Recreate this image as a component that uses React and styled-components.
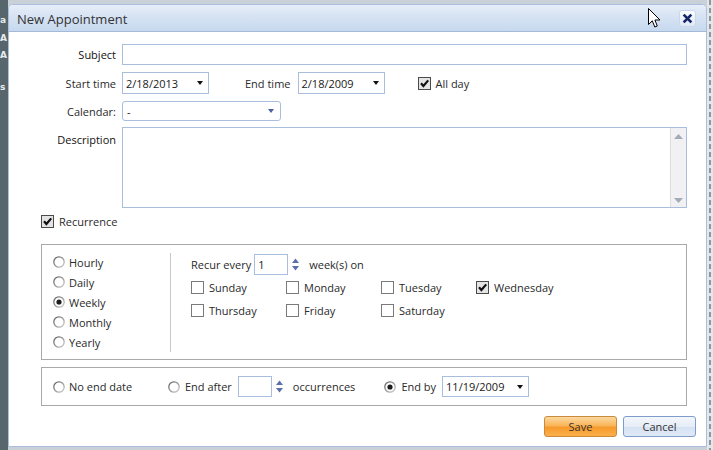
import React from "react";
import styled, { createGlobalStyle } from "styled-components";

const GlobalStyle = createGlobalStyle`
  html, body {
    margin: 0;
    padding: 0;
  }
  body {
    font-family: "Open Sans", "Noto Sans", sans-serif;
    font-size: 11px;
    color: #2a2a2a;
  }
`;

const days = [
  ["Sunday", false],
  ["Monday", false],
  ["Tuesday", false],
  ["Wednesday", true],
  ["Thursday", false],
  ["Friday", false],
  ["Saturday", false],
];

const frequencies = ["Hourly", "Daily", "Weekly", "Monthly", "Yearly"];

const CheckIcon = ({ checked }) => (
  <svg width="13" height="13" viewBox="0 0 13 13">
    <rect
      x="0.5"
      y="0.5"
      width="12"
      height="12"
      fill={checked ? "#e4e4e4" : "#fff"}
      stroke={checked ? "#4a4a4a" : "#7a7a7a"}
    />
    {checked && (
      <path
        d="M3 6.2 L5.4 9 L10.2 3.4"
        fill="none"
        stroke="#111"
        strokeWidth="2.2"
      />
    )}
  </svg>
);

const RadioIcon = ({ checked }) => (
  <svg width="12" height="12" viewBox="0 0 12 12">
    <defs>
      <linearGradient id="rg" x1="0" y1="0" x2="1" y2="1">
        <stop offset="0" stopColor="#5a5a5a" />
        <stop offset="1" stopColor="#d0d0d0" />
      </linearGradient>
    </defs>
    <circle cx="6" cy="6" r="5.2" fill="#fff" stroke="url(#rg)" strokeWidth="1.3" />
    {checked && <circle cx="6" cy="6" r="2.6" fill="#1d1d1d" />}
  </svg>
);

const Spinner = () => (
  <SpinIcon width="7" height="13" viewBox="0 0 7 13">
    <path d="M0 5 L3.5 0.5 L7 5 Z" fill="#5a70ad" />
    <path d="M0 8 L7 8 L3.5 12.5 Z" fill="#5a70ad" />
  </SpinIcon>
);

const App = () => {
  return (
    <>
      <GlobalStyle />
      <Backdrop>
        <LeftStrip>
          <Ghost top={14}>a</Ghost>
          <Ghost top={6}>A</Ghost>
          <Ghost top={5}>A</Ghost>
          <Ghost top={20}>s</Ghost>
        </LeftStrip>
        <RightStrip />
        <Window>
          <TitleBar>
            <Title>New Appointment</Title>
            <CloseButton>
              <svg width="11" height="11" viewBox="0 0 10 10">
                <path d="M1.5 1.5 L8.5 8.5 M8.5 1.5 L1.5 8.5" stroke="#17276a" strokeWidth="2.4" />
              </svg>
            </CloseButton>
          </TitleBar>
          <Cursor width="13" height="21" viewBox="0 0 13 21">
            <path
              d="M0.5 0.5 L0.5 16.5 L4.3 12.8 L6.8 19 L9.3 18 L6.9 12 L12 12 Z"
              fill="#fff"
              stroke="#000"
              strokeWidth="1"
            />
          </Cursor>

          <Body>
            <FieldRow>
              <Label strong>Subject</Label>
              <TextBox />
            </FieldRow>

            <FieldRow gap={7}>
              <Label>Start time</Label>
              <Inline>
                <DateBox>
                  2/18/2013
                  <DropArrow />
                </DateBox>
                <InlineLabel left={36} right={7}>End time</InlineLabel>
                <DateBox>
                  2/18/2009
                  <DropArrow />
                </DateBox>
                <Check left={33}>
                  <CheckIcon checked />
                  All day
                </Check>
              </Inline>
            </FieldRow>

            <FieldRow gap={7}>
              <Label>Calendar:</Label>
              <SelectBox>
                -
                <DropArrow blue />
              </SelectBox>
            </FieldRow>

            <FieldRow gap={6} top>
              <Label strong pad={5}>Description</Label>
              <TextArea>
                <ScrollBar>
                  <svg width="9" height="5" viewBox="0 0 9 5">
                    <path d="M0 5 L4.5 0 L9 5 Z" fill="#a3abb9" />
                  </svg>
                  <svg width="9" height="5" viewBox="0 0 9 5">
                    <path d="M0 0 L9 0 L4.5 5 Z" fill="#a3abb9" />
                  </svg>
                </ScrollBar>
              </TextArea>
            </FieldRow>

            <RecurrenceToggle>
              <Check>
                <CheckIcon checked />
                Recurrence
              </Check>
            </RecurrenceToggle>

            <GroupBox gap={15}>
              <RecurPanel>
                <FreqColumn>
                  {frequencies.map((f) => (
                    <RadioRow key={f}>
                      <RadioIcon checked={f === "Weekly"} />
                      {f}
                    </RadioRow>
                  ))}
                </FreqColumn>
                <Divider />
                <WeeklyColumn>
                  <Inline>
                    Recur every
                    <SmallBox left={3}>1</SmallBox>
                    <Spinner />
                    <InlineLabel left={10}>week(s) on</InlineLabel>
                  </Inline>
                  <DayGrid>
                    {days.map(([d, on]) => (
                      <Check key={d} gap={5}>
                        <CheckIcon checked={on} />
                        {d}
                      </Check>
                    ))}
                  </DayGrid>
                </WeeklyColumn>
              </RecurPanel>
            </GroupBox>

            <GroupBox gap={7}>
              <EndPanel>
                <RadioRow width={115}>
                  <RadioIcon />
                  No end date
                </RadioRow>
                <RadioRow gap={5}>
                  <RadioIcon />
                  End after
                </RadioRow>
                <SmallBox left={6} />
                <Spinner />
                <InlineLabel left={10} right={29}>occurrences</InlineLabel>
                <RadioRow gap={5}>
                  <RadioIcon checked />
                  End by
                </RadioRow>
                <DateBox left={6} short>
                  11/19/2009
                  <DropArrow />
                </DateBox>
              </EndPanel>
            </GroupBox>

            <ButtonRow>
              <Button primary>Save</Button>
              <Button>Cancel</Button>
            </ButtonRow>
          </Body>
        </Window>
      </Backdrop>
    </>
  );
};

export default App;

const Backdrop = styled.div`
  width: 713px;
  height: 450px;
  overflow: hidden;
  display: grid;
  grid-template-columns: 8px 699px 1fr;
  grid-template-rows: 4px 443px 1fr;
  background: #c9d0d7;
`;

const LeftStrip = styled.div`
  grid-column: 1;
  grid-row: 1 / -1;
  background: #56666c;
  display: flex;
  flex-direction: column;
  overflow: hidden;
  font-family: "DejaVu Sans", sans-serif;
  font-weight: bold;
  font-size: 9px;
  color: #e6ecee;
  white-space: nowrap;
`;

const Ghost = styled.span`
  margin-top: ${(p) => p.top}px;
  line-height: 12px;
`;

const RightStrip = styled.div`
  grid-column: 3;
  grid-row: 1 / -1;
  background-color: #e3e7ea;
  background-image: repeating-linear-gradient(
    to bottom,
    #8e979e 0 5px,
    transparent 5px 8px
  );
  background-size: 2px 100%;
  background-position: 2px 0;
  background-repeat: no-repeat;
`;

const Window = styled.div`
  grid-column: 2;
  grid-row: 2;
  position: relative;
  display: flex;
  flex-direction: column;
  background: #fff;
  border: 1px solid #a9bfdc;
  border-radius: 5px 5px 0 0;
  overflow: hidden;
`;

const TitleBar = styled.div`
  height: 28px;
  display: flex;
  align-items: center;
  justify-content: space-between;
  padding: 0 10px 0 8px;
  background: linear-gradient(#e6eef8, #d6e3f3 45%, #c7d9ef);
  border-bottom: 1px solid #a3b9d7;
`;

const Title = styled.span`
  font-size: 13px;
  color: #333;
  padding-top: 1px;
`;

const CloseButton = styled.div`
  width: 15px;
  height: 15px;
  margin-top: 1px;
  display: flex;
  align-items: center;
  justify-content: center;
  border-radius: 3px;
  background: linear-gradient(#fbfdff, #dfe8f4);
  border: 1px solid #cbd7e8;
`;

const Cursor = styled.svg`
  position: absolute;
  left: 639px;
  top: 3px;
`;

const Body = styled.div`
  display: flex;
  flex-direction: column;
  padding: 12px 10px 9px 0;
`;

const FieldRow = styled.div`
  display: grid;
  grid-template-columns: 107px 1fr;
  column-gap: 6px;
  align-items: ${(p) => (p.top ? "start" : "center")};
  margin-top: ${(p) => p.gap || 0}px;
  margin-right: 9px;
`;

const Label = styled.label`
  text-align: right;
  line-height: 15px;
  padding-top: ${(p) => p.pad || 0}px;
  color: ${(p) => (p.strong ? "#111" : "#2a2a2a")};
`;

const Field = styled.div`
  box-sizing: border-box;
  background: #fff;
  border: 1px solid #a9bedc;
`;

const TextBox = styled(Field)`
  height: 21px;
`;

const Inline = styled.div`
  display: flex;
  align-items: center;
  line-height: 15px;
`;

const InlineLabel = styled.span`
  margin-left: ${(p) => p.left || 0}px;
  margin-right: ${(p) => p.right || 0}px;
`;

const DateBox = styled(Field)`
  width: 87px;
  height: ${(p) => (p.short ? 21 : 22)}px;
  margin-left: ${(p) => p.left || 0}px;
  display: flex;
  align-items: center;
  justify-content: space-between;
  padding: 0 5px 0 3px;
  color: #1a1a1a;
`;

const DropArrow = styled.span`
  width: 0;
  height: 0;
  border-left: 3.5px solid transparent;
  border-right: 3.5px solid transparent;
  border-top: 4px solid ${(p) => (p.blue ? "#4b60a2" : "#111")};
`;

const SelectBox = styled(Field)`
  width: 159px;
  height: 20px;
  border-radius: 3px;
  display: flex;
  align-items: center;
  justify-content: space-between;
  padding: 0 6px 0 4px;
  color: #1a1a1a;
`;

const TextArea = styled(Field)`
  height: 81px;
  display: flex;
  justify-content: flex-end;
`;

const ScrollBar = styled.div`
  width: 15px;
  display: flex;
  flex-direction: column;
  align-items: center;
  justify-content: space-between;
  padding: 6px 0 4px;
  background: #f1f1f3;
  border-left: 1px solid #dcdde2;
`;

const Check = styled.div`
  display: flex;
  align-items: center;
  gap: ${(p) => p.gap || 5}px;
  margin-left: ${(p) => p.left || 0}px;
  line-height: 15px;

  svg {
    flex-shrink: 0;
  }
`;

const RecurrenceToggle = styled.div`
  margin-top: 6px;
  padding-left: 32px;
`;

const GroupBox = styled.div`
  margin: ${(p) => p.gap}px 9px 0 32px;
  border: 1px solid #a9a9a9;
`;

const RecurPanel = styled.div`
  display: flex;
  padding: 9px 0 4px;
  height: 101px;
`;

const FreqColumn = styled.div`
  width: 117px;
  padding-left: 11px;
  margin-top: -2px;
  display: flex;
  flex-direction: column;
`;

const RadioRow = styled.div`
  display: flex;
  align-items: center;
  gap: ${(p) => p.gap || 4}px;
  height: 20px;
  width: ${(p) => (p.width ? `${p.width}px` : "auto")};
  flex-shrink: 0;
`;

const Divider = styled.div`
  width: 1px;
  margin-top: -1px;
  height: 99px;
  background: #c9c9c9;
`;

const WeeklyColumn = styled.div`
  padding-left: 20px;
  display: flex;
  flex-direction: column;
`;

const SmallBox = styled(Field)`
  width: 34px;
  height: 21px;
  margin-left: ${(p) => p.left || 0}px;
  padding-left: 3px;
  display: flex;
  align-items: center;
  color: #1a1a1a;
`;

const SpinIcon = styled.svg`
  margin-left: 4px;
`;

const DayGrid = styled.div`
  display: grid;
  grid-template-columns: repeat(4, 95px);
  grid-auto-rows: 23px;
  align-items: center;
  margin-top: 1px;
`;

const EndPanel = styled.div`
  height: 37px;
  display: flex;
  align-items: center;
  padding-left: 11px;
`;

const ButtonRow = styled.div`
  display: flex;
  justify-content: flex-end;
  gap: 6px;
  margin-top: 10px;
`;

const Button = styled.button`
  width: 73px;
  height: 21px;
  padding: 0;
  border-radius: 3px;
  font-family: inherit;
  font-size: 11px;
  color: #333;
  border: 1px solid ${(p) => (p.primary ? "#c98a3c" : "#7f9ccb")};
  background: ${(p) =>
    p.primary
      ? "linear-gradient(#fdd9a0, #f9b559 45%, #f79a2c 55%, #fbb04c)"
      : "linear-gradient(#f4f7fc, #e6edf7 50%, #d6e2f3 55%, #e0e9f6)"};
`;
